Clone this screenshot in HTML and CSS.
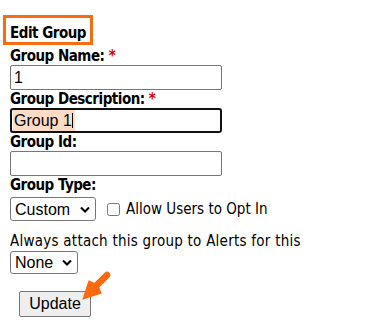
FILE: index.html
```html
<!DOCTYPE html>
<html>
    <head>
        <link rel="stylesheet" href="styles.css">
        <title>Edit Group</title>
    </head>
    <body>
        <div id="editGroupBlock">
            <div class="titleRow">
                <span id="editGroupTitle">Edit Group</span>
            </div>

            <div class="label">Group Name: <span class="required">*</span></div>
            <input type="text" class="textBox" value="1" />

            <div class="label">Group Description: <span class="required">*</span></div>
            <div class="textBox focused"><span class="selected">Group 1</span><span class="caret"></span></div>

            <div class="label">Group Id:</div>
            <input type="text" class="textBox" value="" />

            <div class="label">Group Type:</div>
            <div class="typeRow">
                <select id="groupTypeDropdown" class="dropdown">
                    <option value="custom">Custom</option>
                </select>
                <input type="checkbox" id="optInCheckbox" />
                <span class="plainText">Allow Users to Opt In</span>
            </div>

            <div class="plainText alertsText">Always attach this group to Alerts for this</div>
            <select id="alertsDropdown" class="dropdown">
                <option value="none">None</option>
            </select>

            <div class="buttonRow">
                <input type="button" id="updateButton" value="Update" />
                <svg id="arrow" width="34" height="34" viewBox="0 0 32 32">
                    <path d="M25 3.5 A3 3 0 0 1 29.5 8 L 20 17.5 L 22.5 23 L 4 29 L 10 10.5 L 15.5 13 Z" fill="#fa6a10" />
                </svg>
            </div>
        </div>
    </body>
</html>
```
FILE: styles.css
```css
body {
    margin: 0;
    background: white;
    font-family: "DejaVu Sans Condensed", "DejaVu Sans", sans-serif;
    font-size: 15px;
    color: black;
}
#editGroupBlock {
    padding: 15px 0 0 10px;
}
.titleRow {
    margin-left: -7px;
    margin-bottom: 2px;
}
#editGroupTitle {
    display: inline-block;
    border: 3px solid #fa6a10;
    padding: 6px 4px 0 4px;
    font-weight: bold;
    line-height: 18px;
    letter-spacing: -0.5px;
}
.label {
    font-weight: bold;
    line-height: 18px;
    letter-spacing: -0.5px;
}
.required {
    color: #d00;
    letter-spacing: 0;
}
.textBox {
    display: block;
    box-sizing: border-box;
    width: 212px;
    height: 25px;
    margin: 0;
    padding: 1px 3px;
    border: 1px solid #767676;
    border-radius: 2px;
    font-family: "Liberation Sans", Arial, sans-serif;
    font-size: 16px;
    line-height: 21px;
    background: white;
    outline: none;
}
.focused {
    border: 2px solid #101010;
    border-radius: 3px;
    padding: 0 1px;
    display: flex;
    align-items: stretch;
}
.selected {
    background: #fddcc6;
    padding: 0 3px 0 1px;
    line-height: 21px;
}
.caret {
    width: 1px;
    background: black;
    margin: 3px 0 3px -3px;
}
.typeRow {
    display: flex;
    align-items: center;
    margin-top: 3px;
}
.dropdown {
    appearance: none;
    height: 24px;
    margin: 0;
    padding: 0 0 0 4px;
    border: 1px solid #767676;
    border-radius: 3px;
    background: white url("data:image/svg+xml,%3Csvg xmlns='http://www.w3.org/2000/svg' width='10' height='7' viewBox='0 0 10 7'%3E%3Cpath d='M1 1.5 L5 5.5 L9 1.5' fill='none' stroke='black' stroke-width='2'/%3E%3C/svg%3E") no-repeat right 5px center;
    font-family: "Liberation Sans", Arial, sans-serif;
    font-size: 16px;
    color: black;
}
#groupTypeDropdown {
    width: 86px;
}
#alertsDropdown {
    width: 68px;
    height: 23px;
}
#optInCheckbox {
    width: 13px;
    height: 13px;
    margin: 0 6px 0 11px;
}
.alertsText {
    margin-top: 10px;
    line-height: 20px;
    letter-spacing: 0.25px;
}
.buttonRow {
    position: relative;
    margin: 17px 0 0 9px;
}
#updateButton {
    margin: 0;
    height: 26px;
    width: 72px;
    padding: 0 6px;
    border: 1px solid #767676;
    border-radius: 2px;
    background: #efefef;
    font-family: "Liberation Sans", Arial, sans-serif;
    font-size: 16px;
    color: black;
}
#arrow {
    position: absolute;
    left: 59px;
    top: -22px;
}
```
